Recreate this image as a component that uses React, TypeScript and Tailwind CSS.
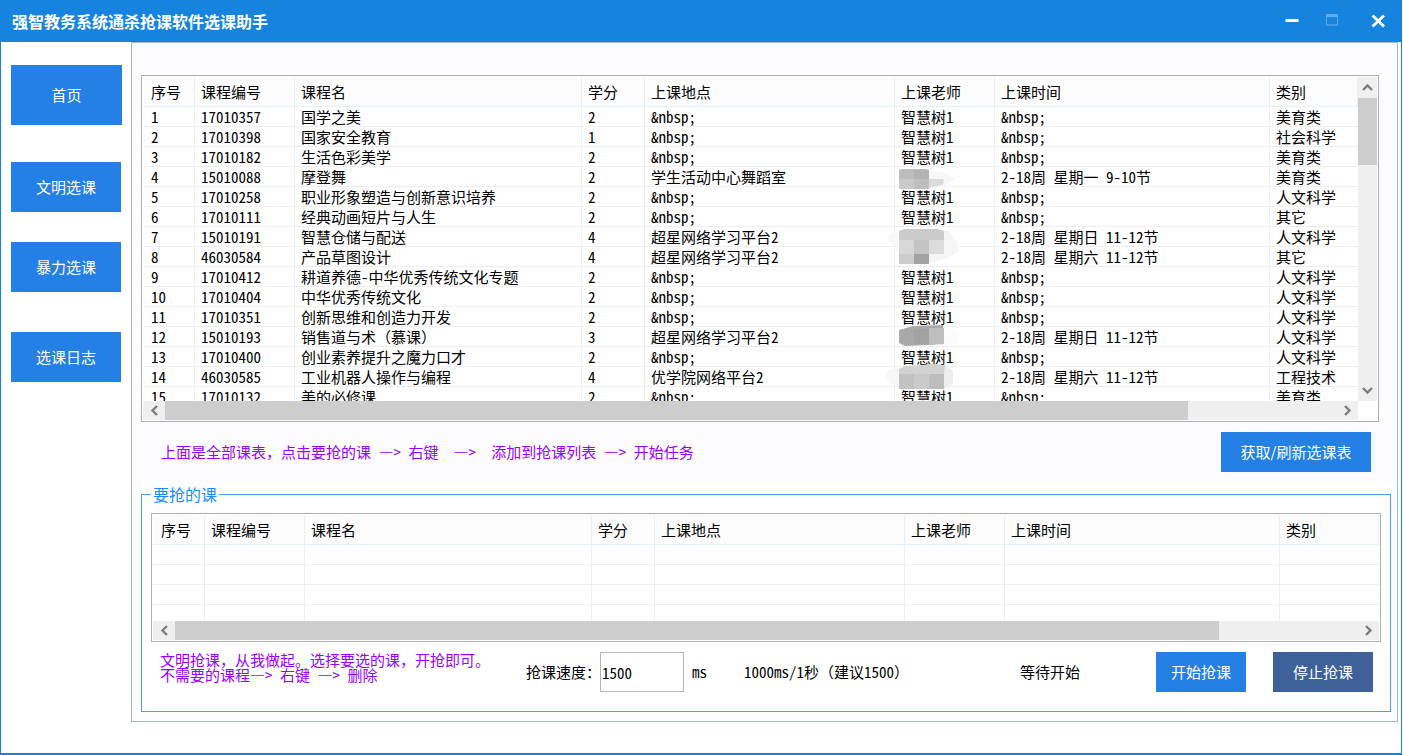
import { useState, type ReactNode } from "react";

type Course = {
  id: number;
  code: string;
  name: string;
  credit: number;
  place: string;
  teacher: string;
  time: string;
  kind: string;
};

const NONE = "&nbsp;";

function course(
  id: number,
  code: string,
  name: string,
  credit: number,
  kind: string,
  place = NONE,
  time = NONE,
  teacher = "智慧树1",
): Course {
  return { id, code, name, credit, kind, place, time, teacher };
}

const COURSES: Course[] = [
  course(1, "17010357", "国学之美", 2, "美育类"),
  course(2, "17010398", "国家安全教育", 1, "社会科学"),
  course(3, "17010182", "生活色彩美学", 2, "美育类"),
  course(4, "15010088", "摩登舞", 2, "美育类", "学生活动中心舞蹈室", "2-18周 星期一 9-10节", ""),
  course(5, "17010258", "职业形象塑造与创新意识培养", 2, "人文科学"),
  course(6, "17010111", "经典动画短片与人生", 2, "其它"),
  course(7, "15010191", "智慧仓储与配送", 4, "人文科学", "超星网络学习平台2", "2-18周 星期日 11-12节", ""),
  course(8, "46030584", "产品草图设计", 4, "其它", "超星网络学习平台2", "2-18周 星期六 11-12节", ""),
  course(9, "17010412", "耕道养德-中华优秀传统文化专题", 2, "人文科学"),
  course(10, "17010404", "中华优秀传统文化", 2, "人文科学"),
  course(11, "17010351", "创新思维和创造力开发", 2, "人文科学"),
  course(12, "15010193", "销售道与术（慕课）", 3, "人文科学", "超星网络学习平台2", "2-18周 星期日 11-12节", ""),
  course(13, "17010400", "创业素养提升之魔力口才", 2, "人文科学"),
  course(14, "46030585", "工业机器人操作与编程", 4, "工程技术", "优学院网络平台2", "2-18周 星期六 11-12节", ""),
  course(15, "17010132", "美的必修课", 2, "美育类"),
];

const HEADERS = ["序号", "课程编号", "课程名", "学分", "上课地点", "上课老师", "上课时间", "类别"];

function Chevron({ d }: { d: string }) {
  return (
    <svg width="11" height="11" viewBox="0 0 11 11" fill="none" stroke="#7d7d7d" strokeWidth="2.4" aria-hidden="true">
      <path d={d} />
    </svg>
  );
}

function CourseTable({ rows, blanks = 0, label }: { rows: Course[]; blanks?: number; label: string }) {
  const cell = "overflow-hidden border-r border-b border-[#efefef] py-0 pr-0 pl-1.5 first:pl-2 last:border-r-0";
  return (
    <table className="w-full table-fixed border-separate border-spacing-0 whitespace-nowrap" aria-label={label}>
      <colgroup>
        <col className="w-[52px]" />
        <col className="w-[100px]" />
        <col className="w-[287px]" />
        <col className="w-[63px]" />
        <col className="w-[250px]" />
        <col className="w-[100px]" />
        <col className="w-[275px]" />
        <col />
      </colgroup>
      <thead>
        <tr className="h-[30px] bg-[#fcfcfc]">
          {HEADERS.map((h) => (
            <th
              key={h}
              scope="col"
              className="border-r border-b border-[#e6f0fb] py-0 pr-0 pl-1.5 text-left font-normal first:pl-2"
            >
              {h}
            </th>
          ))}
        </tr>
      </thead>
      <tbody className="leading-[19px]">
        {rows.map((r) => (
          <tr key={r.id} className="h-5">
            <td className={cell}>{r.id}</td>
            <td className={cell}>{r.code}</td>
            <td className={cell}>{r.name}</td>
            <td className={cell}>{r.credit}</td>
            <td className={cell}>{r.place}</td>
            <td className={cell}>{r.teacher}</td>
            <td className={cell}>{r.time}</td>
            <td className={cell}>{r.kind}</td>
          </tr>
        ))}
        {Array.from({ length: blanks }, (_, i) => (
          <tr key={`blank-${i}`} className="h-5">
            {HEADERS.map((h) => (
              <td key={h} className={cell} />
            ))}
          </tr>
        ))}
      </tbody>
    </table>
  );
}

function HScroll({ percent }: { percent: number }) {
  return (
    <div className="flex h-[19px] bg-[#efefef]">
      <button type="button" aria-label="向左滚动" className="flex w-[22px] items-center justify-center">
        <Chevron d="M8 1 L3.5 5.5 L8 10" />
      </button>
      <div className="flex-1">
        <div className="h-full bg-[#cdcdcd]" style={{ width: `${percent}%` }} />
      </div>
      <button type="button" aria-label="向右滚动" className="flex w-[22px] items-center justify-center">
        <Chevron d="M3 1 L7.5 5.5 L3 10" />
      </button>
    </div>
  );
}

function VScroll() {
  return (
    <div className="flex w-[19px] flex-col bg-[#efefef]">
      <button type="button" aria-label="向上滚动" className="flex h-[21px] items-center justify-center">
        <Chevron d="M1 8 L5.5 3.5 L10 8" />
      </button>
      <div className="flex-1">
        <div className="h-[67px] bg-[#cdcdcd]" />
      </div>
      <button type="button" aria-label="向下滚动" className="flex h-[21px] items-center justify-center">
        <Chevron d="M1 3 L5.5 7.5 L10 3" />
      </button>
    </div>
  );
}

/* Pixelated cover over the private teacher names. */
function Mosaic() {
  return (
    <svg
      className="pointer-events-none absolute top-[89px] left-[743px]"
      width="80"
      height="232"
      viewBox="0 0 80 232"
      aria-hidden="true"
    >
      <path d="M44 6 L58 7 L70 14 L60 21 L44 23Z" fill="#f7f7f7" />
      <path d="M14 5 L18 4 L42 4 L44 8 V14 H14Z" fill="#bcbcbc" />
      <rect x="29" y="5" width="15" height="9" fill="#b3b3b3" />
      <rect x="14" y="14" width="15" height="10" fill="#cacaca" />
      <rect x="29" y="14" width="15" height="10" fill="#bebebe" />
      <path d="M44 14 L59 14 L58 20 L44 23Z" fill="#dcdcdc" />

      <path d="M14 67 L4 68 L3 75 L8 80 L14 82Z" fill="#f8f8f8" />
      <path d="M56 65 L64 66 L72 77 L74 86 L60 94 L44 98 V80Z" fill="#f5f5f5" />
      <path d="M14 66 L20 64 L52 64 L59 66 V75 H14Z" fill="#cbcbcb" />
      <rect x="14" y="75" width="15" height="14" fill="#d7d7d7" />
      <rect x="29" y="75" width="15" height="14" fill="#c4c4c4" />
      <rect x="44" y="75" width="15" height="14" fill="#dcdcdc" />
      <rect x="14" y="89" width="15" height="10" fill="#cccccc" />
      <rect x="29" y="89" width="15" height="10" fill="#a3a3a3" />

      <path d="M59 162 L74 167 V179 H59Z" fill="#fbfbfb" />
      <path d="M14 165 L28 161 L58 160 L59 179 L42 180 L20 181 L14 178Z" fill="#a9a9a9" />
      <rect x="29" y="164" width="15" height="15" fill="#a2a2a2" />
      <rect x="44" y="163" width="15" height="16" fill="#bebebe" />

      <path d="M14 203 L4 204 L0 212 L5 219 L14 221Z" fill="#f7f7f7" />
      <path d="M59 201 L68 205 L68 219 L59 224Z" fill="#eeeeee" />
      <path d="M14 204 L20 201 L48 199 L60 200 L59 208 V224 H14Z" fill="#d2d2d2" />
      <rect x="14" y="209" width="15" height="15" fill="#c2c2c2" />
      <rect x="29" y="209" width="15" height="15" fill="#cacaca" />
      <rect x="44" y="209" width="15" height="15" fill="#bdbdbd" />
    </svg>
  );
}

/* The proportional face sets the dash one full character wide. */
function Arrow() {
  return (
    <>
      <span className="font-['Noto_Sans_CJK_SC',sans-serif]">—</span>&gt;
    </>
  );
}

function ActionButton({ className, children }: { className: string; children: ReactNode }) {
  return (
    <button type="button" className={`shrink-0 text-white hover:brightness-110 ${className}`}>
      {children}
    </button>
  );
}

export default function App() {
  const [speed, setSpeed] = useState("1500");

  return (
    <div
      lang="zh-CN"
      className="flex min-h-screen flex-col bg-white pr-px font-['Noto_Sans_Mono_CJK_SC','Noto_Sans_CJK_SC',sans-serif] text-[15px] leading-5 text-black"
    >
      <header className="flex h-[42px] items-center justify-between bg-[#1683de] pr-4 pl-3 text-white">
        <h1 className="font-['Noto_Sans_CJK_SC',sans-serif] text-base font-bold">强智教务系统通杀抢课软件选课助手</h1>
        <div className="flex items-center gap-6">
          <button type="button" aria-label="最小化" className="flex size-4 items-center justify-center">
            <svg width="14" height="14" viewBox="0 0 14 14" aria-hidden="true">
              <rect x="0.5" y="5" width="13" height="3" fill="#fff" />
            </svg>
          </button>
          <button type="button" aria-label="最大化" disabled className="flex size-4 items-center justify-center">
            <svg width="12" height="14" viewBox="0 0 12 14" aria-hidden="true">
              <path d="M0.5 0.5 H11.5 V11 H0.5Z" fill="none" stroke="#63acea" />
              <rect x="0" y="0" width="12" height="3" fill="#63acea" />
            </svg>
          </button>
          <button type="button" aria-label="关闭" className="flex w-[22px] items-center justify-end">
            <svg width="15" height="14" viewBox="0 0 15 14" stroke="#fff" strokeWidth="2.8" aria-hidden="true">
              <path d="M1.5 1.5 L13 12.5 M13 1.5 L1.5 12.5" />
            </svg>
          </button>
        </div>
      </header>

      <div className="flex flex-1 border-r border-b-2 border-l border-[#1683de] pr-[3px] pb-[31px]">
        <nav className="flex w-[130px] shrink-0 flex-col pt-[23px] pl-2.5 font-['Noto_Sans_CJK_SC',sans-serif]">
          <ActionButton className="h-[60px] w-[111px] bg-[#2480e4]">首页</ActionButton>
          <ActionButton className="mt-[37px] h-[50px] w-[110px] bg-[#2480e4]">文明选课</ActionButton>
          <ActionButton className="mt-[30px] h-[50px] w-[110px] bg-[#2480e4]">暴力选课</ActionButton>
          <ActionButton className="mt-10 h-[50px] w-[110px] bg-[#2480e4]">选课日志</ActionButton>
        </nav>

        <main className="min-w-0 flex-1 border border-[#a9b7c2] bg-[#fcfcff] pt-8 pr-1.5 pb-[9px] pl-[9px]">
          <section className="relative mr-3 border border-[#aeaeb4] bg-white p-px">
            <div className="flex">
              <div className="h-[324px] min-w-0 flex-1 overflow-hidden">
                <CourseTable rows={COURSES} label="全部课表" />
              </div>
              <VScroll />
            </div>
            <div className="pr-[19px]">
              <HScroll percent={87.4} />
            </div>
            <Mosaic />
          </section>

          <div className="flex h-[60px] items-center justify-between pr-5 pl-5">
            <p className="whitespace-pre text-[#9900ff]">
              上面是全部课表，点击要抢的课 <Arrow /> 右键{"  "}
              <Arrow />
              {"  "}添加到抢课列表 <Arrow /> 开始任务
            </p>
            <ActionButton className="h-10 w-[150px] bg-[#2480e4] font-['Noto_Sans_CJK_SC',sans-serif]">
              获取/刷新选课表
            </ActionButton>
          </div>

          <div className="bg-white">
            <fieldset className="min-w-0 border border-[#4d9cf5] px-[9px] pt-[7px] pb-[19px]">
              <legend className="px-0.5 text-base leading-6 text-[#1a8cff]">要抢的课</legend>
              <section className="border border-[#aeaeb4] p-px">
                <div className="h-[106px] overflow-hidden">
                  <CourseTable rows={[]} blanks={4} label="要抢的课" />
                </div>
                <HScroll percent={88.3} />
              </section>

              <div className="mt-2.5 flex items-center pr-2 pl-[9px]">
                <p className="w-[366px] shrink-0 self-start leading-[15px] text-[#9900ff]">
                  文明抢课，从我做起。选择要选的课，开抢即可。
                  <br />
                  不需要的课程
                  <Arrow /> 右键 <Arrow /> 删除
                </p>
                <label htmlFor="speed" className="w-[74px] shrink-0 whitespace-nowrap">
                  抢课速度：
                </label>
                <input
                  id="speed"
                  type="text"
                  value={speed}
                  onChange={(e) => setSpeed(e.target.value)}
                  className="h-10 w-[84px] shrink-0 border border-[#b4b4bc] bg-white px-px outline-none"
                />
                <span className="ml-2 w-[52px] shrink-0">ms</span>
                <span className="w-[276px] shrink-0 whitespace-nowrap">1000ms/1秒（建议1500）</span>
                <output className="shrink-0">等待开始</output>
                <div className="ml-auto flex gap-[27px] font-['Noto_Sans_CJK_SC',sans-serif]">
                  <ActionButton className="h-10 w-[90px] bg-[#2480e4]">开始抢课</ActionButton>
                  <ActionButton className="h-10 w-[100px] bg-[#3e6199]">停止抢课</ActionButton>
                </div>
              </div>
            </fieldset>
          </div>
        </main>
      </div>
    </div>
  );
}
